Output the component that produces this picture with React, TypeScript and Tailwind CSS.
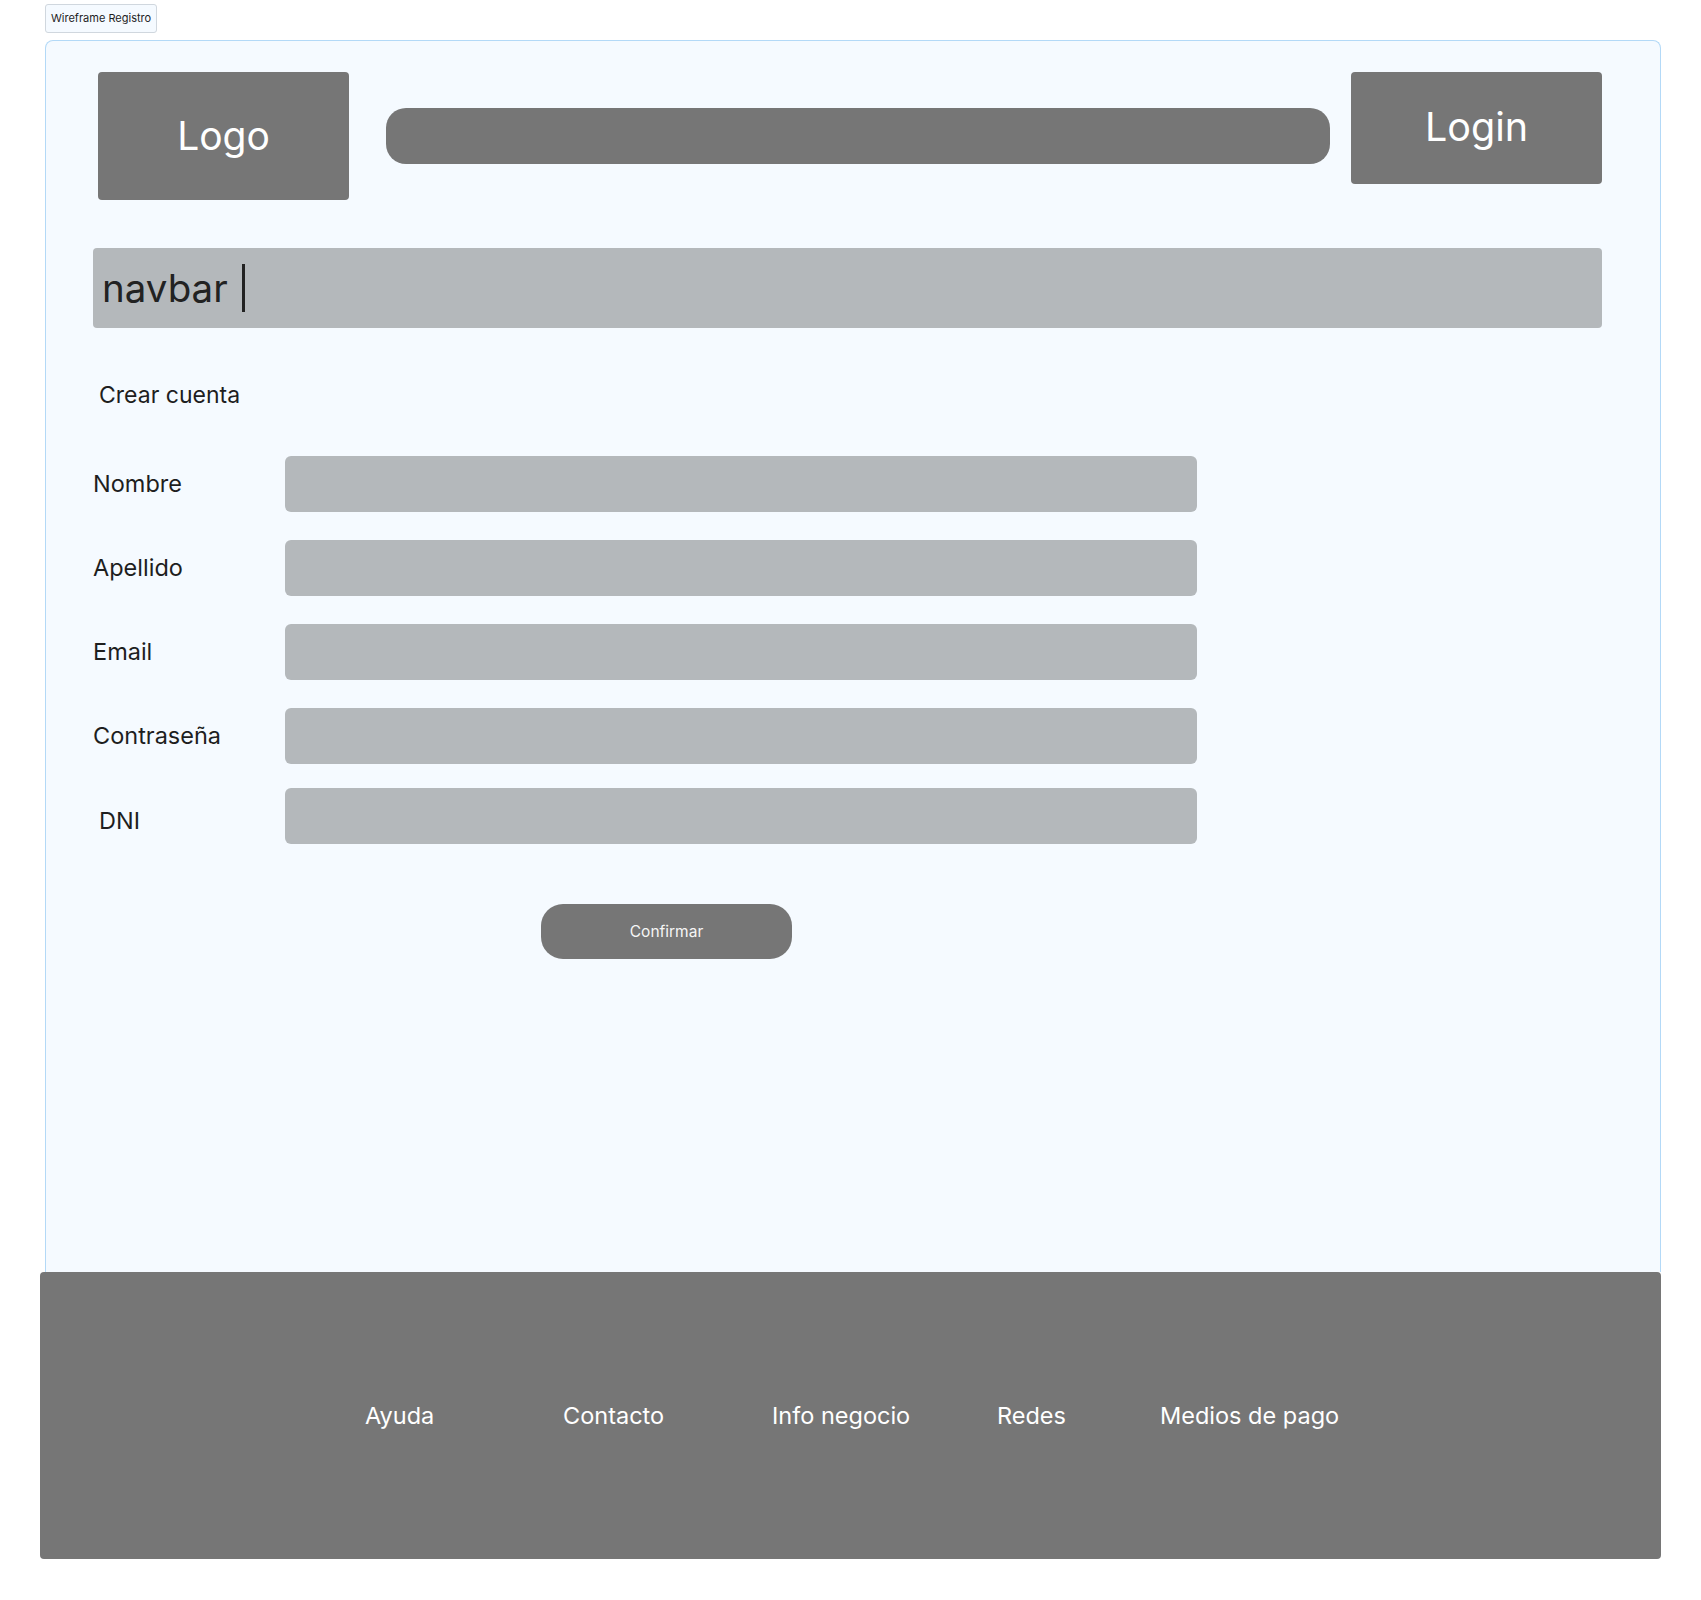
const fieldRows = [
  { label: 'Nombre', gap: 'mt-[48px]' },
  { label: 'Apellido', gap: 'mt-[28px]' },
  { label: 'Email', gap: 'mt-[28px]' },
  { label: 'Contraseña', gap: 'mt-[28px]' },
];

function FieldRow({ label, gap }: { label: string; gap: string }) {
  return (
    <div className={`flex items-center ${gap}`}>
      <span className="ml-[47px] w-[192px] text-[23.5px] leading-[26px] text-[#1e1e1e]">{label}</span>
      <div className="h-[56px] w-[912px] rounded-[6px] bg-[#b4b8bb]" />
    </div>
  );
}

export default function App() {
  return (
    <div className="min-h-[1600px] bg-white pt-[4px] font-['Inter',sans-serif]">
      <div className="ml-[45px] inline-flex h-[29px] items-center rounded-[3px] border border-[#d0d7de] bg-[#f5faff] px-[5px] text-[11px] text-[#1e1e1e]">
        Wireframe Registro
      </div>

      <div className="ml-[45px] mt-[7px] h-[1232px] w-[1616px] rounded-t-[8px] border-[1.5px] border-b-0 border-[#b3d9f7] bg-[#f5faff]">
        <header className="mt-[31px] flex items-start">
          <div className="ml-[52px] flex h-[128px] w-[251px] items-center justify-center rounded-[4px] bg-[#767676] text-[39px] text-white">
            Logo
          </div>
          <div className="ml-[37px] mt-[36px] h-[56px] w-[944px] rounded-[20px] bg-[#767676]" />
          <div className="ml-[21px] flex h-[112px] w-[251px] items-center justify-center rounded-[4px] bg-[#767676] text-[39.5px] text-white">
            Login
          </div>
        </header>

        <nav className="ml-[47px] mt-[48px] flex h-[80px] w-[1509px] items-center rounded-[4px] bg-[#b4b8bb] pl-[9px]">
          <span className="text-[38.5px] leading-none text-[#222]">navbar</span>
          <span className="ml-[14px] h-[48px] w-[3px] bg-[#222]" />
        </nav>

        <h1 className="ml-[53px] mt-[54px] text-[23px] leading-[26px] text-[#1e1e1e]">Crear cuenta</h1>

        <form>
          {fieldRows.map((row) => (
            <FieldRow key={row.label} label={row.label} gap={row.gap} />
          ))}
          <div className="mt-[24px] flex items-center">
            <span className="ml-[53px] w-[186px] pt-[9px] text-[23.5px] leading-[26px] text-[#1e1e1e]">DNI</span>
            <div className="h-[56px] w-[912px] rounded-[6px] bg-[#b4b8bb]" />
          </div>

          <button
            type="button"
            className="ml-[495px] mt-[60px] flex h-[55px] w-[251px] items-center justify-center rounded-[22px] bg-[#767676] text-[15.5px] text-[#f5f5f5]"
          >
            Confirmar
          </button>
        </form>
      </div>

      <footer className="ml-[40px] flex h-[287px] w-[1621px] items-center rounded-[4px] bg-[#767676] pl-[325px] text-[23.5px] text-white">
        <span className="w-[198px]">Ayuda</span>
        <span className="w-[209px]">Contacto</span>
        <span className="w-[225px]">Info negocio</span>
        <span className="w-[163px]">Redes</span>
        <span>Medios de pago</span>
      </footer>
    </div>
  );
}
